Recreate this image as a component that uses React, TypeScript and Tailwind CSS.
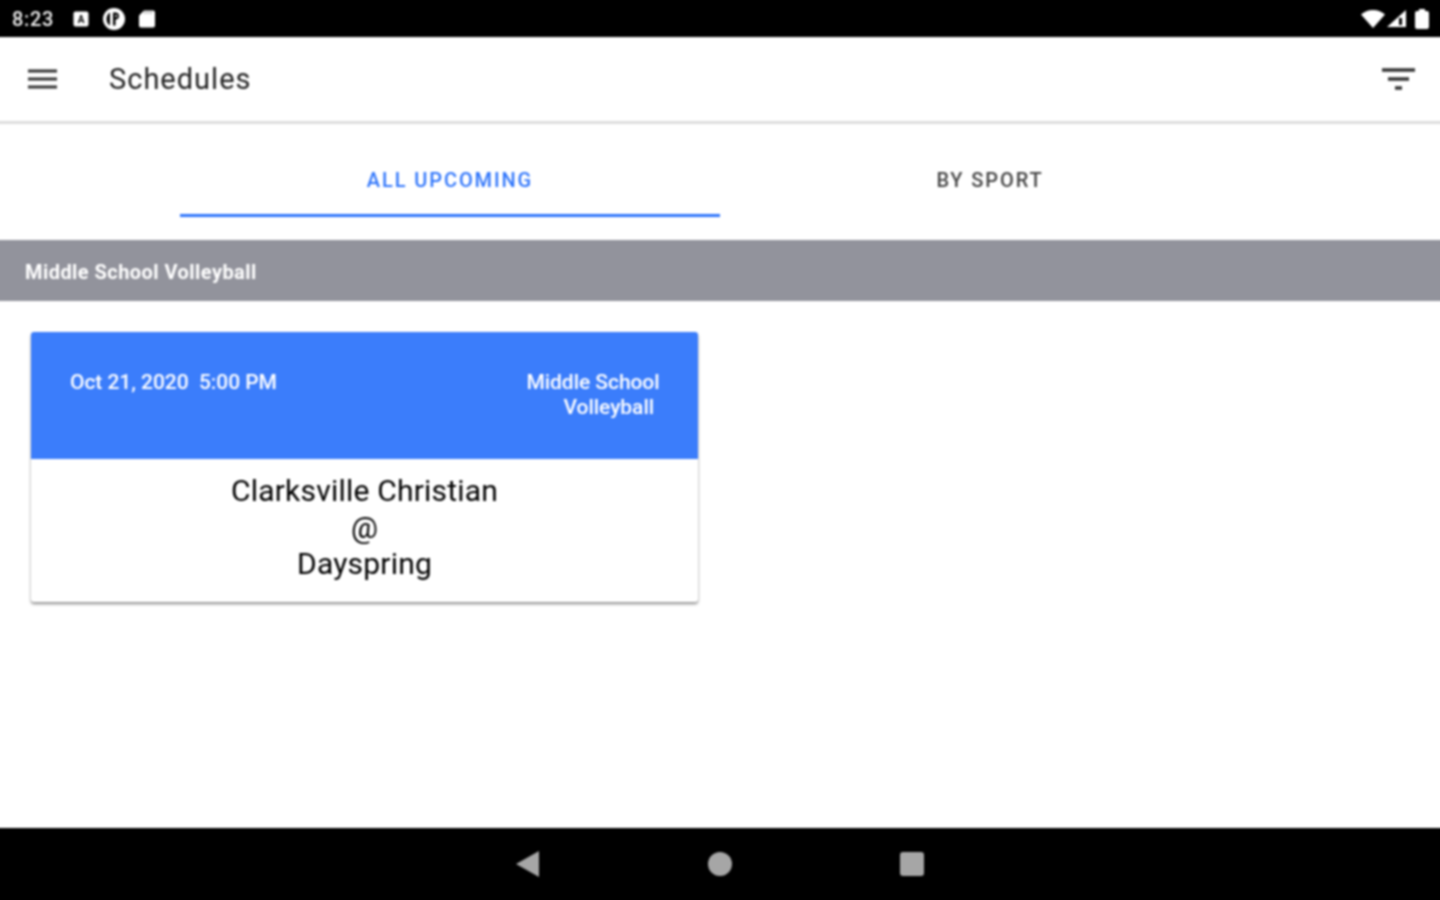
import React from "react";

export default function App() {
  return (
    <div className="w-[1440px] h-[900px] overflow-hidden bg-white">
      <div className="w-[1448px] h-[908px] -ml-1 -mt-1 flex flex-col bg-white font-['Roboto',sans-serif] blur-[0.8px]">
        <div className="h-[41px] bg-black flex items-center justify-between pl-4 pt-1 pr-[15px] text-white shrink-0">
          <div className="flex items-center">
            <span className="text-[20px] leading-none text-[#eeeeee] w-[60px] tracking-[0.7px] font-medium">8:23</span>
            <svg width="16" height="16" viewBox="0 0 16 16" className="ml-[1px]">
              <rect x="0.500" y="0.500" width="15" height="15" rx="2" fill="#fff" />
              <text x="8" y="12" textAnchor="middle" fontSize="10" fontWeight="700" fontFamily="Roboto" fill="#000">A</text>
            </svg>
            <svg width="24" height="24" viewBox="0 0 24 24" className="ml-[13px]">
              <circle cx="12" cy="12" r="11" fill="#fff" />
              <path d="M8 5.500C5.500 7 4.500 9.500 4.500 12S5.500 17 8 18.500z" fill="#000" />
              <path d="M11 5.500h3a3.500 3.500 0 0 1 3 3.500 3.500 3.500 0 0 1-3 3.500h-.5v6H11z" fill="#000" />
              <circle cx="14.200" cy="9" r="1.100" fill="#fff" />
            </svg>
            <svg width="18" height="18" viewBox="0 0 18 18" className="ml-[12px]">
              <path d="M6 0.500h9a2 2 0 0 1 2 2v13a2 2 0 0 1-2 2H3a2 2 0 0 1-2-2V5.500z" fill="#fff" />
              <path d="M7 1v3M10 1v3M13 1v3" stroke="#777" strokeWidth="0.800" />
            </svg>
          </div>
          <div className="flex items-center">
            <svg width="24" height="18" viewBox="0 0 24 18">
              <path d="M0 4.500C3 1.800 7 0 12 0s9 1.800 12 4.500L12 18z" fill="#fff" />
            </svg>
            <svg width="19" height="18" viewBox="0 0 19 18" className="ml-[2px]">
              <path d="M0 17L19 0v17z" fill="#fff" />
              <path d="M12 8h3v7h-3z" fill="#000" />
            </svg>
            <svg width="14" height="20" viewBox="0 0 14 20" className="ml-[9px]">
              <path d="M4 0h6v2h2a2 2 0 0 1 2 2v14a2 2 0 0 1-2 2H2a2 2 0 0 1-2-2V4a2 2 0 0 1 2-2h2z" fill="#fff" />
            </svg>
          </div>
        </div>

        <div className="h-[87px] shrink-0 bg-white flex items-center justify-between pl-[32px] pr-[28px] border-b-[3px] border-[#dedede]">
          <div className="flex items-center">
            <svg width="30" height="20" viewBox="0 0 30 20">
              <path d="M0 2h29M0 10h29M0 18h29" stroke="#333" strokeWidth="3" />
            </svg>
            <span className="ml-[51px] text-[29px] leading-none text-[#222] tracking-[1px]">Schedules</span>
          </div>
          <svg width="34" height="24" viewBox="0 0 34 24">
            <path d="M0 3h33M6 12h21M13 21h7" stroke="#333" strokeWidth="3.500" />
          </svg>
        </div>

        <div className="h-[116px] shrink-0 flex justify-center">
          <div className="w-[540px] h-[93px] flex items-center justify-center border-b-[3px] border-[#2f75fb] text-[#2f75fb] text-[20px] font-medium tracking-[1.9px] pt-[21px]">
            ALL UPCOMING
          </div>
          <div className="w-[540px] h-[93px] flex items-center justify-center border-b-[3px] border-transparent text-[#444] text-[20px] font-medium tracking-[1.9px] pt-[21px]">
            BY SPORT
          </div>
        </div>

        <div className="h-[61px] shrink-0 bg-[#92939c] flex items-center pl-[29px] pt-[2px] text-white text-[20px] font-bold tracking-[0.45px]">
          Middle School Volleyball
        </div>

        <div className="flex-1 pt-[31px] pl-[35px]">
          <div className="w-[667px] h-[270px] rounded-[3px] bg-white shadow-[0_2px_3px_rgba(0,0,0,0.45)] overflow-hidden">
            <div className="h-[127px] bg-[#3b7dfb] flex justify-between pl-[39px] pr-[38px] pt-[38px] text-white text-[21px] leading-[25px] font-medium tracking-[-0.05px]">
              <span>Oct 21, 2020&nbsp;&nbsp;5:00 PM</span>
              <span className="w-[134px]">
                <span className="block text-center">Middle School</span>
                <span className="block text-right pr-[6px]">Volleyball</span>
              </span>
            </div>
            <div className="pt-[14px] text-center text-[#000] text-[30px] leading-[36.500px] tracking-[0.2px]">
              <div>Clarksville Christian</div>
              <div>@</div>
              <div>Dayspring</div>
            </div>
          </div>
        </div>

        <div className="h-[76px] shrink-0 bg-black flex items-center justify-center gap-[168px] pb-1">
          <svg width="24" height="26" viewBox="0 0 24 26"><path d="M23 0v26L0 13z" fill="#a6a6a6" /></svg>
          <div className="w-[24px] h-[24px] rounded-full bg-[#a6a6a6]" />
          <div className="w-[24px] h-[24px] rounded-[3px] bg-[#a6a6a6]" />
        </div>
      </div>
    </div>
  );
}
